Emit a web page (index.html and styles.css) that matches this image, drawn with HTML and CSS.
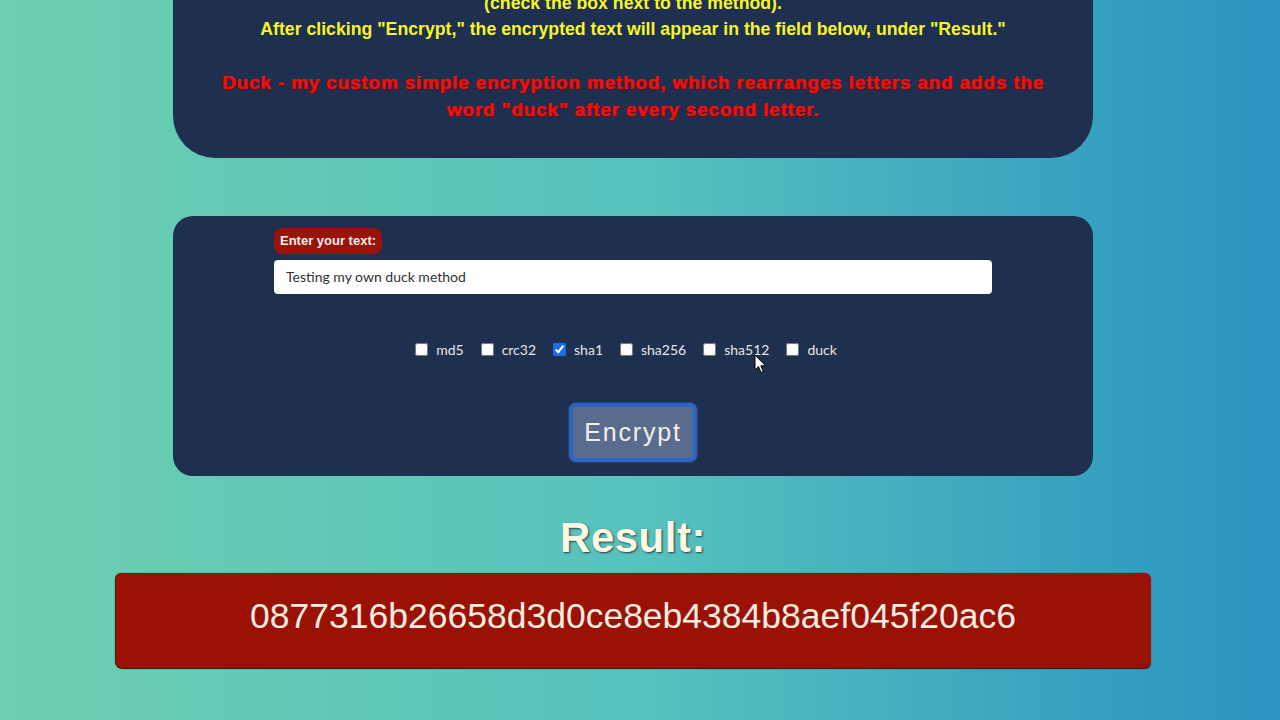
FILE: index.html
```html
<!DOCTYPE html>
<html lang="en">
<head>
<meta charset="utf-8">
<title>Encryptor</title>
<link rel="stylesheet" href="styles.css">
</head>
<body>
<main class="page">
  <section class="info-card">
    <p class="info-text">Enter your text in the field and choose one of the encryption methods<br>(check the box next to the method).<br>After clicking "Encrypt," the encrypted text will appear in the field below, under "Result."</p>
    <p class="duck-text">Duck - my custom simple encryption method, which rearranges letters and adds the word "duck" after every second letter.</p>
  </section>

  <section class="form-card">
    <div class="field">
      <label class="field-label" for="txt">Enter your text:</label>
      <input class="field-input" id="txt" type="text" value="Testing my own duck method">
    </div>
    <div class="methods">
      <label class="method"><input type="checkbox"><span>md5</span></label>
      <label class="method"><input type="checkbox"><span>crc32</span></label>
      <label class="method"><input type="checkbox" checked><span>sha1</span></label>
      <label class="method"><input type="checkbox"><span>sha256</span></label>
      <label class="method"><input type="checkbox"><span>sha512</span></label>
      <label class="method"><input type="checkbox"><span>duck</span></label>
    </div>
    <button class="encrypt-btn" type="button">Encrypt</button>
  </section>

  <h2 class="result-title">Result:</h2>
  <div class="result-box">0877316b26658d3d0ce8eb4384b8aef045f20ac6</div>
</main>
<svg class="cursor" width="13" height="20" viewBox="0 0 13 20"><path d="M1 1 L1 16 L4.5 12.5 L7 18.5 L9.3 17.5 L6.8 11.8 L11.5 11.8 Z" fill="#fff" stroke="#000" stroke-width="1"/></svg>
</body>
</html>
```
FILE: styles.css
```css
* { box-sizing: border-box; }
html, body { margin: 0; height: 100%; overflow: hidden; }
body {
  background: linear-gradient(to right, #6ccfb0 0%, #57c2bd 50%, #2993c1 100%);
  font-family: "Liberation Sans", Arial, sans-serif;
  position: relative;
}
.page {
  display: flex;
  flex-direction: column;
  align-items: center;
  padding-right: 14px;
}
.info-card {
  width: 920px;
  margin-top: -67px;
  background: #1e2f4f;
  border-radius: 0 0 42px 42px;
  padding: 30px 20px 35px;
  text-align: center;
}
.info-text {
  margin: 0;
  color: #f6f628;
  font-weight: bold;
  font-size: 17.7px;
  line-height: 26.5px;
}
.duck-text {
  margin: 26px auto 0;
  width: 840px;
  color: #f01010;
  font-weight: bold;
  font-size: 19px;
  letter-spacing: 0.8px;
  line-height: 27px;
  text-shadow: 0.5px 0 0 #f01010, 1px 1px 1px #7a0808;
}
.form-card {
  width: 920px;
  margin-top: 58px;
  background: #1e2f4f;
  border-radius: 20px;
  padding: 12px 0 15px;
  display: flex;
  flex-direction: column;
  align-items: center;
}
.field {
  width: 718px;
  display: flex;
  flex-direction: column;
  align-items: flex-start;
  gap: 6px;
}
.field-label {
  background: #95150b;
  color: #f3ece6;
  font-weight: bold;
  font-size: 13px;
  padding: 0 6px;
  height: 26px;
  line-height: 26px;
  border-radius: 8px;
}
.field-input {
  width: 718px;
  height: 34px;
  border: none;
  border-radius: 4px;
  background: #fff;
  font-family: Lato, "Open Sans", sans-serif;
  font-size: 14px;
  color: #333;
  padding: 0 12px;
}
.methods {
  display: flex;
  align-items: center;
  gap: 17px;
  margin-top: 48px;
  height: 16px;
  padding-right: 14px;
}
.method {
  display: flex;
  align-items: center;
  gap: 8px;
  color: #e6e6e6;
  font-family: Lato, "Open Sans", sans-serif;
  font-size: 14px;
}
.method input {
  margin: 0;
  width: 13px;
  height: 13px;
  accent-color: #1b6ee8;
}
.encrypt-btn {
  margin-top: 46px;
  width: 126px;
  height: 57px;
  border: 3px solid #2c65c7;
  border-radius: 6px;
  background: #5a6c8e;
  box-shadow: 0 0 2px 1px #3a78d8;
  color: #f2f0e6;
  font-family: "Liberation Sans", Arial, sans-serif;
  font-size: 25px;
  letter-spacing: 1.8px;
  padding: 0;
}
.result-title {
  margin: 38px 0 0;
  height: 48px;
  line-height: 48px;
  color: #fdf8e2;
  font-size: 42px;
  font-weight: bold;
  letter-spacing: 0.5px;
  text-shadow: 1px 1px 2px #2a3a3a;
}
.result-box {
  margin-top: 11px;
  width: 1035px;
  height: 95px;
  background: #9a1204;
  border-radius: 6px;
  box-shadow: -1px 0 1px #3a1010, 0 1px 1px #3a1010;
  display: flex;
  align-items: center;
  justify-content: center;
  color: #f6ece2;
  font-size: 35.5px;
  padding-bottom: 7px;
}
.cursor {
  position: absolute;
  left: 754px;
  top: 354px;
}
```
